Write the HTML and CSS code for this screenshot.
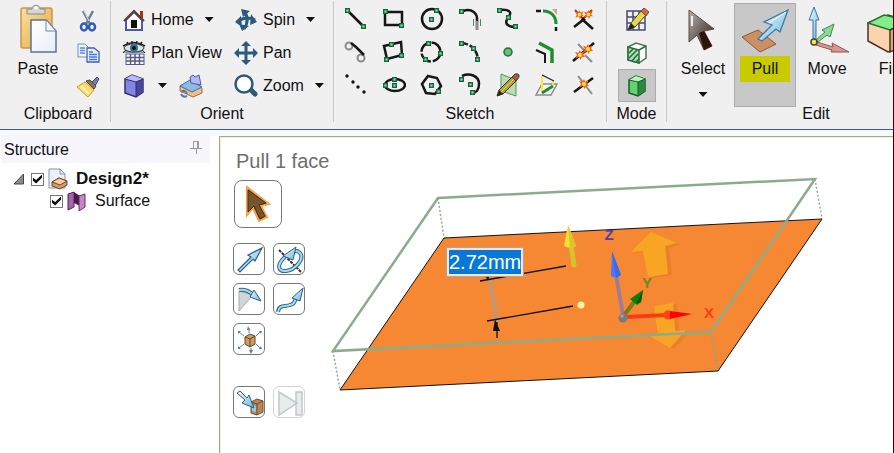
FILE: index.html
```html
<!DOCTYPE html>
<html lang="en">
<head>
<meta charset="utf-8">
<title>Design2*</title>
<link rel="stylesheet" href="styles.css">
</head>
<body>
<svg class="defs" aria-hidden="true">
  <defs>
    <linearGradient id="gold" x1="0" x2="1" y1="0" y2="1"><stop offset="0" stop-color="#fbe0a0"/><stop offset="1" stop-color="#e2a640"/></linearGradient>
    <linearGradient id="paper" x1="0" x2="1" y1="0" y2="1"><stop offset="0" stop-color="#fff"/><stop offset="1" stop-color="#e8edf8"/></linearGradient>
    <linearGradient id="sky" x1="0" x2="1" y1="0" y2="1"><stop offset="0" stop-color="#eefaff"/><stop offset="1" stop-color="#6fb6dc"/></linearGradient>
    <linearGradient id="pointer" x1="0" x2="1" y1="0" y2="1"><stop offset="0" stop-color="#b9b4ae"/><stop offset=".5" stop-color="#6b625c"/><stop offset="1" stop-color="#3c1f12"/></linearGradient>
    <symbol id="node" viewBox="0 0 5 5"><rect x=".7" y=".7" width="3.6" height="3.6" fill="#a4cfb4" stroke="#0b6b38" stroke-width="1.4"/></symbol>
    <symbol id="burst" viewBox="0 0 10 10"><path d="M5 0L6.3 2.8L9.5 1.5L8 4.6L10 7L7 7L5.5 10L4 7L.5 8.5L2 5L0 2L3.5 2.8Z" fill="#f2641c"/><circle cx="5" cy="5" r="2" fill="#ffe52e"/></symbol>
  </defs>
</svg>

<header class="ribbon">
  <section class="group clipboard">
    <div class="body">
      <button class="big">
        <svg width="40" height="50" viewBox="0 0 40 50"><rect x="3" y="4" width="31" height="40" rx="2" fill="url(#gold)" stroke="#c9974a" stroke-width="1.5"/><path d="M9 10V5h5c0-5 8-5 8 0h5v5z" fill="#d5d5d5" stroke="#8a8a8a"/><circle cx="18" cy="4" r="1.8" fill="#fff"/><path d="M13 16H28L38 27V48H13Z" fill="url(#paper)" stroke="#5c7396" stroke-width="1.5"/><path d="M28 16V27H38Z" fill="#f5f8fd" stroke="#7088a8"/></svg>
        <span>Paste</span>
      </button>
      <div class="stack">
        <button class="tool" aria-label="Cut"><svg width="24" height="24" viewBox="0 0 24 24"><path d="M7 3L14 16M17 3L10 16" stroke="#6c7f94" stroke-width="2.5"/><path d="M8 3L13 13" stroke="#dbe4ec"/><ellipse cx="8" cy="19" rx="3" ry="3.5" fill="none" stroke="#2e5bb8" stroke-width="2.5"/><ellipse cx="16" cy="19" rx="3" ry="3.5" fill="none" stroke="#2e5bb8" stroke-width="2.5"/></svg></button>
        <button class="tool" aria-label="Copy"><svg width="24" height="24" viewBox="0 0 24 24"><path d="M2 3H9L13 7V16H2Z" fill="#eef4ff" stroke="#6d8fd0"/><path d="M4 7h5M4 9.500h5M4 12h5" stroke="#5b86d6" stroke-width="1.3"/><path d="M11 7H18L23 11V21H11Z" fill="#e8f0ff" stroke="#3a62b4" stroke-width="1.3"/><path d="M13 11h4M13 13.500h8M13 16h8M13 18.500h8" stroke="#4879d4" stroke-width="1.3"/></svg></button>
        <button class="tool" aria-label="Format painter"><svg width="24" height="24" viewBox="0 0 24 24"><path d="M15 9L21 3L23 5L19 12Z" fill="#777bc0" stroke="#454b8c"/><path d="M10 7L14 6L20 12L18 15Z" fill="#8d765c" stroke="#564635"/><path d="M9 8L18 16L12 23L1 13Z" fill="#f7dc70" stroke="#c39b34"/><path d="M5 12L13 20" stroke="#fff3b6" stroke-width="2"/></svg></button>
      </div>
    </div>
    <h2>Clipboard</h2>
  </section>

  <section class="group orient">
    <div class="body">
      <button class="cmd"><svg width="24" height="24" viewBox="0 0 24 24"><path d="M18 3h3v8l-3-3z" fill="#a33426"/><path d="M4 12L12 4L20 12V22H4Z" fill="#fff" stroke="#5059a8" stroke-width="2"/><path d="M2 13L12 3L22 13" fill="none" stroke="#5b3d30" stroke-width="2"/><rect x="9" y="12" width="6" height="8" fill="#111"/></svg><span>Home</span><i class="caret"></i></button>
      <button class="cmd"><svg width="24" height="24" viewBox="0 0 24 24"><path d="M1 12C5 5 19 5 23 12" fill="#89a0ad" stroke="#222"/><path d="M1 5Q12-2 23 5" fill="none" stroke="#222" stroke-width="1.5"/><path d="M5 1l1 3M10 0v3M15 0l-1 3M20 1l-2 3" stroke="#222" stroke-width="1.5"/><ellipse cx="12" cy="7" rx="10" ry="4" fill="#d5e4e9" stroke="#333"/><circle cx="12" cy="7" r="4" fill="#39708f"/><circle cx="12" cy="7" r="2" fill="#111"/><rect x="4" y="13" width="18" height="10.500" fill="#fff" stroke="#555a86"/><path d="M8.500 13v11M13 13v11M17.500 13v11M4 16.500h18M4 20h18" stroke="#555a86" stroke-width="1.5"/></svg><span>Plan View</span></button>
      <div class="pair">
        <button class="cmd" aria-label="View cube"><svg width="24" height="24" viewBox="0 0 24 24"><path d="M3 5L10 1L21 5V18L14 23L3 19Z" fill="#8484e2" stroke="#30306a" stroke-width="1.5"/><path d="M3 5L10 1L21 5L14 8Z" fill="#b9b9fb"/><path d="M14 8L21 5V18L14 23Z" fill="#45459c"/><path d="M3 5L14 8V23M14 8L21 5" fill="none" stroke="#30306a"/></svg><i class="caret"></i></button>
        <button class="cmd" aria-label="Snap view"><svg width="24" height="24" viewBox="0 0 24 24"><path d="M1 12L10 8L23 14V19L14 23L1 17Z" fill="#f2bd87" stroke="#9a6a43"/><path d="M1 12L11 6L23 13L13 18Z" fill="#8abce4" stroke="#3b6ca0"/><path d="M11 3L14 1L16 3L20 1L22 11L12 9Z" fill="#b5b7f2" stroke="#5658a4"/><path d="M2 18q4-3 6 2M2 20q2 4 6 2" fill="none" stroke="#6871aa" stroke-width="2"/></svg></button>
      </div>
      <button class="cmd"><svg width="24" height="24" viewBox="0 0 24 24"><path d="M3 14Q12 7 21 12M9 3Q17 10 10 21" fill="none" stroke="#2c5a7c" stroke-width="3"/><path d="M1 14L7 8L8 19ZM23 14L17 6L16 17ZM7 1L16 3L9 9ZM8 23L5 16L15 18Z" fill="#2c5a7c"/></svg><span>Spin</span><i class="caret"></i></button>
      <button class="cmd"><svg width="24" height="24" viewBox="0 0 24 24"><path d="M12 0L17 5H13.500V10.500H19V7L24 12L19 17V13.500H13.500V19H17L12 24L7 19H10.500V13.500H5V17L0 12L5 7V10.500H10.500V5H7Z" fill="#2c5a7c"/></svg><span>Pan</span></button>
      <button class="cmd"><svg width="24" height="24" viewBox="0 0 24 24"><path d="M16 15L21 20" stroke="#2c5a7c" stroke-width="5" stroke-linecap="round"/><circle cx="10" cy="10" r="8.5" fill="#fff" stroke="#2c5a7c" stroke-width="2.5"/></svg><span>Zoom</span><i class="caret"></i></button>
    </div>
    <h2>Orient</h2>
  </section>

  <section class="group sketch">
    <div class="body">
      <button class="tool" aria-label="Line"><svg width="24" height="24" viewBox="0 0 24 24"><path d="M4 4L20 20" class="ink"/><use href="#node" x="1" y="1" width="5" height="5"/><use href="#node" x="17" y="17" width="5" height="5"/></svg></button>
      <button class="tool" aria-label="Rectangle"><svg width="24" height="24" viewBox="0 0 24 24"><rect x="3" y="5" width="17" height="13" class="ink"/><use href="#node" x="1" y="2" width="5" height="5"/><use href="#node" x="17" y="16" width="5" height="5"/></svg></button>
      <button class="tool" aria-label="Circle"><svg width="24" height="24" viewBox="0 0 24 24"><circle cx="12" cy="12" r="10" class="ink"/><use href="#node" x="9" y="10" width="5" height="5"/><use href="#node" x="14" y="1" width="5" height="5"/></svg></button>
      <button class="tool" aria-label="Tangent arc"><svg width="24" height="24" viewBox="0 0 24 24"><path d="M5 4C14 1 20 6 19 14" class="ink"/><path d="M19 14V23" stroke="#8b8b8b" stroke-width="3"/><path d="M15.500 12v7M22.500 12v7" stroke="#3d9157"/><use href="#node" x="1" y="2" width="5" height="5"/></svg></button>
      <button class="tool" aria-label="Spline"><svg width="24" height="24" viewBox="0 0 24 24"><path d="M4 3C13 2 17 5 12 11C8 16 11 20 20 20" class="ink"/><use href="#node" x="1" y="1" width="5" height="5"/><use href="#node" x="10" y="8" width="5" height="5"/><use href="#node" x="17" y="17" width="5" height="5"/></svg></button>
      <button class="tool" aria-label="Rounded corner"><svg width="24" height="24" viewBox="0 0 24 24"><path d="M2 4h5M22 20v4" class="ink"/><path d="M18 2h5v6z" fill="#d7a08f"/><path d="M9 4C17 4 22 9 22 17" fill="none" stroke="#1f8f2d" stroke-width="3"/></svg></button>
      <button class="tool" aria-label="Trim away"><svg width="24" height="24" viewBox="0 0 24 24"><path d="M3 3L11 12L20 3" fill="none" stroke="#a33a28" stroke-width="2"/><path d="M2 20L11 13L21 22" class="ink"/><path d="M9 13L11 10L14 13" fill="#111"/><use href="#burst" x="3" y="3" width="9" height="9"/><use href="#burst" x="12" y="3" width="9" height="9"/></svg></button>

      <button class="tool" aria-label="Tangent line"><svg width="24" height="24" viewBox="0 0 24 24"><circle cx="5" cy="6" r="3.5" fill="none" stroke="#8b8b8b" stroke-width="2"/><circle cx="17" cy="18" r="3.5" fill="none" stroke="#8b8b8b" stroke-width="2"/><path d="M7 3L12 7L20 15" class="ink"/></svg></button>
      <button class="tool" aria-label="Three-point rectangle"><svg width="24" height="24" viewBox="0 0 24 24"><path d="M2 6L19 2L20 15L5 19Z" class="ink"/><use href="#node" x="7" y="2" width="5" height="5"/><use href="#node" x="17" y="13" width="5" height="5"/><use href="#node" x="2" y="17" width="5" height="5"/></svg></button>
      <button class="tool" aria-label="Three-point circle"><svg width="24" height="24" viewBox="0 0 24 24"><circle cx="11" cy="12" r="9.5" class="ink" stroke-dasharray="13 2"/><use href="#node" x="6" y="1" width="5" height="5"/><use href="#node" x="18" y="11" width="5" height="5"/><use href="#node" x="3" y="17" width="5" height="5"/></svg></button>
      <button class="tool" aria-label="Three-point arc"><svg width="24" height="24" viewBox="0 0 24 24"><path d="M4 3Q18 5 20 19" class="ink" stroke-dasharray="6 2"/><use href="#node" x="1" y="1" width="5" height="5"/><use href="#node" x="13" y="6" width="5" height="5"/><use href="#node" x="17" y="17" width="5" height="5"/></svg></button>
      <button class="tool" aria-label="Point"><svg width="24" height="24" viewBox="0 0 24 24"><circle cx="12" cy="12" r="4" fill="#74b878" stroke="#1c6b3c" stroke-width="1.5"/></svg></button>
      <button class="tool" aria-label="Offset curve"><svg width="24" height="24" viewBox="0 0 24 24"><path d="M5 3L18 10V23" fill="none" stroke="#1f8f2d" stroke-width="3.5"/><path d="M2 10L11 14V23" class="ink thin"/></svg></button>
      <button class="tool" aria-label="Split curve"><svg width="24" height="24" viewBox="0 0 24 24"><path d="M1 21L22 3" class="ink"/><path d="M6 4L12 10M13 15L20 22" stroke="#8b8b8b" stroke-width="2"/><path d="M8 15L16 9" stroke="#8e271c" stroke-width="3"/><use href="#burst" x="3" y="10" width="10" height="10"/><use href="#burst" x="11" y="4" width="10" height="10"/></svg></button>

      <button class="tool" aria-label="Construction line"><svg width="24" height="24" viewBox="0 0 24 24"><path d="M3 3h0M9 9h0M14 14h0M20 19h0" stroke="#111" stroke-width="3.4" stroke-linecap="round"/></svg></button>
      <button class="tool" aria-label="Ellipse"><svg width="24" height="24" viewBox="0 0 24 24"><ellipse cx="13" cy="12" rx="10" ry="6" class="ink"/><use href="#node" x="1" y="10" width="5" height="5"/><use href="#node" x="10" y="10" width="5" height="5"/><use href="#node" x="10" y="4" width="5" height="5"/></svg></button>
      <button class="tool" aria-label="Polygon"><svg width="24" height="24" viewBox="0 0 24 24"><path d="M8 3L17 5L21 13L15 21L6 20L2 11Z" class="ink"/><use href="#node" x="9" y="10" width="5" height="5"/><use href="#node" x="16" y="16" width="5" height="5"/></svg></button>
      <button class="tool" aria-label="Sweep arc"><svg width="24" height="24" viewBox="0 0 24 24"><path d="M4 3C11 0 21 2 21 11C21 17 18 20 14 20" class="ink"/><use href="#node" x="1" y="4" width="5" height="5"/><use href="#node" x="10" y="9" width="5" height="5"/><use href="#node" x="12" y="17" width="5" height="5"/></svg></button>
      <button class="tool" aria-label="Face curve"><svg width="24" height="24" viewBox="0 0 24 24"><path d="M5 1L20 7V23L5 18Z" fill="#b9dcb4" stroke="#4c9a60"/><path d="M1 23L3 17L16 4L20 8L7 21Z" fill="#b49f3a" stroke="#3f3520"/><path d="M1 23L3 17L7 21Z" fill="#33251b"/><path d="M16 4L19 1Q22 0 23 2Q24 4 20 8Z" fill="#976047" stroke="#54382b"/><path d="M5 19L18 6" stroke="#e5d66b"/></svg></button>
      <button class="tool" aria-label="Project to sketch"><svg width="24" height="24" viewBox="0 0 24 24"><path d="M2 22L8 11H23L17 22Z" fill="#f4f4f4" stroke="#8b8b8b" stroke-width="1.5"/><path d="M8 3V19M19 8V12" stroke="#f4e838" stroke-width="2"/><path d="M8 2L20 8" stroke="#222" stroke-width="1.3"/><path d="M8 20L19 13" stroke="#1f8f2d" stroke-width="3"/></svg></button>
      <button class="tool" aria-label="Create corner"><svg width="24" height="24" viewBox="0 0 24 24"><path d="M6 3L20 21" stroke="#8b8b8b" stroke-width="2"/><path d="M2 19L21 5" class="ink"/><use href="#burst" x="7" y="6" width="10" height="10"/></svg></button>
    </div>
    <h2>Sketch</h2>
  </section>

  <section class="group mode">
    <div class="body">
      <button class="tool" aria-label="Sketch mode"><svg width="24" height="24" viewBox="0 0 24 24"><path d="M2 3H20V22H2ZM8 3V22M14 3V22M2 9H20M2 15H20" fill="none" stroke="#454a70" stroke-width="1.5"/><path d="M3 22L6 15L17 2L22 6L10 19Z" fill="#e9d84b" stroke="#57491f"/><path d="M3 22L6 15L10 19Z" fill="#222"/><path d="M16 3L19 0L24 4L21 8Z" fill="#c46c4c" stroke="#7c4631"/></svg></button>
      <button class="tool" aria-label="Section mode"><svg width="24" height="24" viewBox="0 0 24 24"><path d="M3 6L11 2L21 5V17L14 22L3 19Z" fill="#fff" stroke="#49745a" stroke-width="1.5"/><path d="M3 6L14 9V22L3 19Z" fill="#a8dfb1" stroke="#276b3b" stroke-width="1.5"/><path d="M4 12L8 8M4 17L12 9M7 20L13 13M11 21L14 18M14 9L21 5" stroke="#276b3b" stroke-width="1.5"/></svg></button>
      <button class="tool active" aria-label="3D mode"><svg width="24" height="24" viewBox="0 0 24 24"><path d="M4 6L11 2L20 5V17L13 22L4 19Z" fill="#65d271" stroke="#145c27" stroke-width="1.5"/><path d="M4 6L11 2L20 5L13 8Z" fill="#b9f3b9"/><path d="M13 8L20 5V17L13 22Z" fill="#2d8740"/><path d="M4 6L13 8V22M13 8L20 5" fill="none" stroke="#145c27"/></svg></button>
    </div>
    <h2>Mode</h2>
  </section>

  <section class="group edit">
    <div class="body">
      <button class="big"><svg width="40" height="50" viewBox="0 0 40 50"><path d="M6 6L31 25L21 27L29 42L21 46L14 31L6 38Z" fill="url(#pointer)" stroke="#5b4a40"/><path d="M16 29L21 27L29 42L21 46Z" fill="#321309"/><path d="M9 12V22" stroke="#eee" stroke-width="2"/></svg><span>Select</span><i class="caret"></i></button>
      <button class="big active"><svg width="50" height="50" viewBox="0 0 50 50"><path d="M2 33L18 26L36 40L20 48Z" fill="#cb8f62" stroke="#8b5936"/><path d="M18 35L32 21L24 18L48 6L40 28L36 25L22 37Z" fill="url(#sky)" stroke="#3a7ba8" stroke-width="1.3"/><path d="M29 19L46 8" stroke="#fff"/></svg><span><mark>Pull</mark></span></button>
      <button class="big"><svg width="44" height="50" viewBox="0 0 44 50"><path d="M8 37V16H4L9 3L14 16H11V37Z" fill="url(#sky)" stroke="#3c749e"/><path d="M11 36L20 28L17 26L29 20L25 33L22 31L13 38Z" fill="#8ed69a" stroke="#3d8d4e"/><path d="M12 38L28 43L27 39L44 48L26 48L27 46L11 41Z" fill="#d49a94" stroke="#9a514c"/><circle cx="9" cy="38" r="3" fill="#f2e46a" stroke="#4c4620" stroke-width="1.5"/></svg><span>Move</span></button>
      <button class="big"><svg width="44" height="50" viewBox="0 0 44 50"><path d="M1 19L21 11L43 18V40L21 48L1 37Z" fill="#fbd3ac" stroke="#4a3223" stroke-width="1.5"/><path d="M1 19L17 11L43 17L23 26Z" fill="#82ef86" stroke="#2d6e38" stroke-width="1.5"/><path d="M23 26L43 17V40L23 48Z" fill="#e1a876" stroke="#4a3223" stroke-width="1.5"/></svg><span>Fill</span></button>
    </div>
    <h2>Edit</h2>
  </section>
</header>

<main class="workspace">
  <aside class="structure">
    <div class="panel-head">
      <h2>Structure</h2>
      <button class="pin" aria-label="Auto hide"><svg width="12" height="14" viewBox="0 0 12 14"><path d="M3.500 8V1.500H8.500V8M7.500 1V8M0 8.500H12M6.500 8V14" fill="none" stroke="#9a9a9e"/></svg></button>
    </div>
    <ul class="tree">
      <li>
        <div class="row">
          <svg class="twist" width="12" height="12" viewBox="0 0 12 12"><path d="M1 11L10.500 1V11Z" fill="#8c8c8c" stroke="#444"/></svg>
          <input type="checkbox" id="design" checked>
          <svg width="20" height="22" viewBox="0 0 20 22"><path d="M1 1H12L17 6V20H1Z" fill="#edf1f8" stroke="#8192ad"/><path d="M12 1V6H17" fill="none" stroke="#8192ad"/><path d="M4 14L11 10L19 13V17L12 21L4 18Z" fill="#d49b67" stroke="#70472b"/><path d="M4 14L11 10L19 13L12 17Z" fill="#f6ce9f" stroke="#70472b"/></svg>
          <label for="design" class="root">Design2*</label>
        </div>
        <ul>
          <li class="row child">
            <input type="checkbox" id="surface" checked>
            <svg width="20" height="20" viewBox="0 0 20 20"><path d="M1 3L7 1V16L1 19Z" fill="#a763ae" stroke="#542158"/><path d="M7 1L13 5V15L7 12Z" fill="#4d1750"/><path d="M12 5L18 3V16L12 20Z" fill="#c485c9" stroke="#62306a"/></svg>
            <label for="surface">Surface</label>
          </li>
        </ul>
      </li>
    </ul>
  </aside>

  <section class="viewport">
    <svg class="scene" width="673" height="316" viewBox="220 137 673 316">
      <g stroke="#8fae91" stroke-dasharray="2 2" stroke-width="1.5"><path d="M438 198L444 238M815 179L822 219M333 351L340 390"/></g>
      <path d="M444 238L822 219L718 371L340 390Z" fill="#f68833" stroke="#111"/>
      <g fill="#e9802e"><path d="M655 234L681 245L669 248L672 275L652 278L647 252L635 253Z"/><path d="M658 306L677 304L679 331L690 331L674 349L654 338L662 337Z"/></g>
      <g fill="#f9a524"><path d="M651 232L677 243L665 246L668 274L648 277L643 251L631 252Z"/><path d="M654 306L673 303L675 331L686 330L670 348L650 336L658 335Z"/></g>
      <path d="M490 279L497 323" stroke="#b39a80" stroke-width="5" stroke-dasharray="2 1"/>
      <path d="M480 281L566 266M487 321L573 306M497 322V338" stroke="#111" stroke-width="1.3"/>
      <path d="M495 319L493 331L500 331ZM484 275L490 275L488 280Z" fill="#111"/>
      <path d="M711 332L718 371" stroke="#7daa97" stroke-dasharray="2 2" stroke-width="1.5"/>
      <path d="M438 198L815 179L711 332L333 351Z" fill="none" stroke="#8bac8c" stroke-width="2.5"/>
      <path d="M571 245L574 265" stroke="#d7c22d" stroke-width="5" stroke-linecap="round"/><path d="M568 225L564 246Q570 249 576 246Z" fill="#f3e135"/><path d="M568 225L570 248L576 246Z" fill="#d9c62c"/>
      <circle cx="581" cy="305" r="3.5" fill="#faf3a0"/>
      <path d="M616 275L623 315" stroke="#a17b91" stroke-width="4"/><path d="M612 251L611 276Q616 279 621 275Z" fill="#4778ff"/><path d="M612 251L616 278L621 275Z" fill="#3c69ea"/>
      <path d="M625 314L637 298" stroke="#7a7b19" stroke-width="4"/><path d="M643 290L630 299L637 305L641 302Z" fill="#078009"/><path d="M643 290L636 304L641 302Z" fill="#045a06"/>
      <path d="M626 317L667 315" stroke="#f83d13" stroke-width="4"/><circle cx="668" cy="315" r="4.5" fill="#ff4318"/><path d="M670 311L692 314L670 319Z" fill="#f00"/>
      <circle cx="623" cy="318" r="4.5" fill="#777c80"/><circle cx="622" cy="316" r="1.5" fill="#a6abad"/>
      <g class="axis"><text x="609" y="240" fill="#573dad">Z</text><text x="647" y="288" fill="#6d8a19">Y</text><text x="709" y="318" fill="#ff3d12">X</text></g>
    </svg>
    <input class="dimension" type="text" aria-label="Pull distance" value="2.72mm">
    <h1>Pull 1 face</h1>
    <button class="guide select" aria-label="Select"><svg width="36" height="38" viewBox="0 0 36 38"><path d="M7 2L29 19L21 21L27 32L19 36L13 23L7 30Z" fill="#765126" stroke="#f6a34a" stroke-width="2"/><path d="M8 5L26 18L19 20L25 31L20 34L14 21L8 27Z" fill="#76552c" stroke="#463018"/></svg></button>
    <div class="guides">
      <button class="guide" aria-label="Pull direction"><svg width="32" height="32" viewBox="0 0 32 32"><path d="M4 26L17 13L14 11L28 4L21 17L19 15L6 28Z" fill="url(#sky)" stroke="#2d5f86" stroke-width="1.2"/></svg></button>
      <button class="guide" aria-label="Revolve"><svg width="32" height="32" viewBox="0 0 32 32"><path d="M5 6L27 28" stroke="#333" stroke-width="2" stroke-dasharray="3 1"/><path d="M11 13C3 20 3 28 12 27C21 26 31 15 26 9C23 6 20 7 18 9" fill="none" stroke="#2d678c" stroke-width="4"/><path d="M11 13C3 20 3 28 12 27C21 26 31 15 26 9C23 6 20 7 18 9" fill="none" stroke="#a7dcf0" stroke-width="2"/><path d="M9 12L22 3L19 16Z" fill="url(#sky)" stroke="#2d5f86"/></svg></button>
      <button class="guide" aria-label="Draft"><svg width="32" height="32" viewBox="0 0 32 32"><path d="M5 7V27L19 11Z" fill="#d1d4d8" stroke="#aaa"/><path d="M5 6Q14 4 21 13" fill="none" stroke="#2d678c" stroke-width="4"/><path d="M5 6Q14 4 21 13" fill="none" stroke="#a7dcf0" stroke-width="2"/><path d="M16 13L20 6L27 17Z" fill="url(#sky)" stroke="#2d5f86"/></svg></button>
      <button class="guide" aria-label="Sweep"><svg width="32" height="32" viewBox="0 0 32 32"><path d="M4 28C5 20 11 23 16 21C21 20 20 18 23 12" fill="none" stroke="#2d678c" stroke-width="4"/><path d="M4 28C5 20 11 23 16 21C21 20 20 18 23 12" fill="none" stroke="#a7dcf0" stroke-width="2"/><path d="M18 14L29 4L26 17Z" fill="url(#sky)" stroke="#2d5f86"/></svg></button>
      <button class="guide" aria-label="Scale body"><svg width="32" height="32" viewBox="0 0 32 32"><path d="M11 13L16 10L21 12V20L16 23L11 20Z" fill="#d29a64" stroke="#68462b"/><path d="M11 13L16 15V23M16 15L21 12" fill="none" stroke="#68462b"/><path d="M15 9V4M10 12L5 8M22 12L26 8M10 20L5 24M17 24V28M22 20L26 24" stroke="#5d8dad"/><path d="M13 6L14 2L16 6ZM4 10L4 7L7 7ZM25 7L28 7L27 10ZM4 22L4 25L7 25ZM15 26L17 30L19 26ZM25 25L28 25L27 22Z" fill="#4f85a8"/></svg></button>
    </div>
    <div class="guides later">
      <button class="guide" aria-label="Up to"><svg width="32" height="32" viewBox="0 0 32 32"><path d="M17 15L23 12L29 14V25L23 28L17 26Z" fill="#bf8753" stroke="#70492c"/><path d="M17 15L23 17L29 14M23 17V28" fill="none" stroke="#70492c"/><path d="M18 18L22 19V25L18 24Z" fill="#8fd0e9"/><path d="M3 6L6 4L13 11L15 8L20 21L8 16L11 13Z" fill="url(#sky)" stroke="#2d5f86"/></svg></button>
      <button class="guide" aria-label="Full pull" disabled><svg width="32" height="32" viewBox="0 0 32 32"><path d="M5 5L23 16L5 28ZM22 5H28V28H22Z" fill="#d0dadb" stroke="#8b9092" stroke-width="1.5"/></svg></button>
    </div>
  </section>
</main>
</body>
</html>
```
FILE: styles.css
```css
* { box-sizing: border-box; }

body {
  margin: 0;
  min-height: 100vh;
  display: flex;
  flex-direction: column;
  overflow: hidden;
  border-right: 1px solid #111;
  background: #fff;
  color: #111;
  font: 16px/20px "Liberation Sans", Arial, sans-serif;
}

h1, h2, ul { margin: 0; padding: 0; font-size: inherit; font-weight: normal; }
ul { list-style: none; }
svg { display: block; flex: none; }
button { margin: 0; padding: 0; border: 0; background: none; color: inherit; font: inherit; }
.defs { position: absolute; width: 0; height: 0; }

/* Ribbon */
.ribbon {
  display: flex;
  overflow: hidden;
  padding: 1px 0 7px;
  border-bottom: 1px solid #2f6291;
  background: #f0f0f0;
}
.group {
  flex: none;
  display: flex;
  flex-direction: column;
  border-right: 1px solid #c8c8c8;
}
.group > h2 { height: 18px; text-align: center; }
.body { display: flex; height: 103px; }

.big {
  display: flex;
  flex-direction: column;
  align-items: center;
  width: 62px;
  height: 104px;
  border: 1px solid transparent;
}
.big svg { margin-bottom: 5px; }
.big .caret { margin-top: 13px; }
.big mark { display: block; padding: 3px 12px; margin-top: -3px; background: #c9ca00; color: inherit; }
.tool {
  display: flex;
  align-items: center;
  justify-content: center;
  width: 38px;
  height: 33px;
}
.active { background: #c8c8c8; border: 1px solid #acacac; }
.caret {
  width: 9px;
  height: 5px;
  background: #111;
  clip-path: polygon(0 0, 100% 0, 50% 100%);
}

.clipboard { width: 111px; }
.clipboard .body { padding: 2px 0 0 7px; }
.clipboard > h2 { padding-left: 6px; }
.stack { display: flex; flex-direction: column; }

.orient .body {
  display: grid;
  grid-template: repeat(3, 33px) / 112px 100px;
  grid-auto-flow: column;
  padding: 2px 0 0 11px;
  width: 222px;
}
.orient { width: 223px; }
.cmd { display: flex; align-items: center; gap: 5px; white-space: nowrap; }
.cmd span + .caret { margin-left: 6px; }
.cmd svg + .caret { margin-left: 7px; }
.pair { display: flex; gap: 12px; }

.sketch .body {
  display: grid;
  grid-template: repeat(3, 33px) / repeat(7, 38px);
  padding: 1px 3px 0;
}
.ink { fill: none; stroke: #161616; stroke-width: 2.5px; }
.ink.thin { stroke-width: 2px; }

.mode { width: 60px; }
.mode .body { flex-direction: column; align-items: center; padding-top: 2px; }

.edit { width: 299px; }
.edit .body { padding: 2px 5px 0; }

/* Structure panel */
.workspace {
  flex: 1;
  display: flex;
  padding-top: 3px;
  background: linear-gradient(#f8f9fe 6px, #fff 6px);
}
.structure { flex: none; width: 219px; padding-left: 1px; }
.panel-head {
  display: flex;
  justify-content: space-between;
  align-items: center;
  width: 209px;
  height: 30px;
  padding: 3px 8px 0 3px;
  background: #f6f6fc;
}
.pin { margin-top: -6px; }
.tree { padding: 5px 0 0 12px; }
.row { display: flex; align-items: center; height: 22px; }
.twist { margin-right: 6px; }
.child { padding-left: 37px; }
.row input {
  appearance: none;
  width: 13px;
  height: 13px;
  margin: 0 4px 0 0;
  border: 1px solid #777;
  background: #fff;
}
.row:not(.child) input { margin-left: 0; }
.row input:checked::before {
  content: "";
  display: block;
  width: 9px;
  height: 9px;
  margin: 1px;
  background: #111;
  clip-path: polygon(0 35%, 35% 62%, 100% 0, 100% 35%, 35% 100%, 0 70%);
}
.row label { margin-left: 8px; }
.row .root { font-size: 17px; font-weight: bold; }

/* Viewport */
.viewport {
  flex: 1;
  position: relative;
  overflow: hidden;
  margin-top: 3px;
  padding: 12px 0 0 13px;
  border: solid #a8a88c;
  border-width: 1px 0 0 1px;
  background: #fff;
  box-shadow: inset 1px 1px #f1ecdc;
}
.viewport h1 {
  position: relative;
  padding-left: 3px;
  color: #6e6e6e;
  font-size: 20px;
  line-height: 24px;
}
.scene { position: absolute; left: 0; top: 0; }
.axis { font-size: 15px; font-weight: bold; text-anchor: middle; }
.dimension {
  position: absolute;
  left: 226px;
  top: 110px;
  width: 78px;
  height: 30px;
  padding: 2px;
  border: 1px solid #a5a5a5;
  background: linear-gradient(#0878d8, #0878d8) content-box, #fbe3d3;
  color: #fff;
  font: inherit;
  font-size: 20px;
}
.guide {
  position: relative;
  display: grid;
  place-items: center;
  width: 32px;
  height: 32px;
  border: 1px solid #777;
  border-radius: 6px;
  background: #fff;
}
.guide:disabled { opacity: .5; border-color: #aaa; }
.guide.select { width: 48px; height: 48px; margin: 7px 0 15px 1px; border-radius: 8px; }
.guides { display: grid; grid-template-columns: repeat(2, 32px); gap: 8px; }
.guides.later { margin-top: 31px; }
```
